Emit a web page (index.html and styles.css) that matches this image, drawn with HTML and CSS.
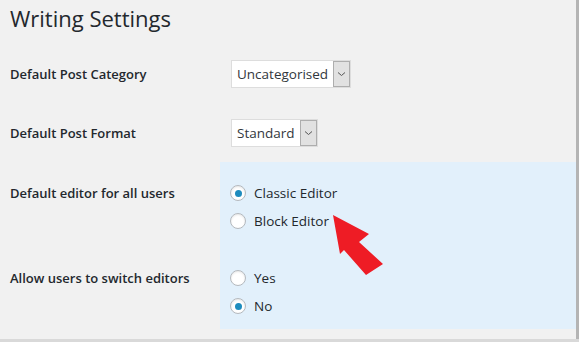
FILE: index.html
```html
<!DOCTYPE html>
<html lang="en">

<head>
    <meta charset="UTF-8">
    <title>Writing Settings</title>
    <link rel="stylesheet" href="styles.css">
</head>

<body>

    <div class="wrap">
        <h1>Writing Settings</h1>

        <div class="form-table">
            <!-- Category -->
            <div class="row">
                <div class="label">Default Post Category</div>
                <div class="field">
                    <div class="select select-cat">
                        <span class="select-text">Uncategorised</span>
                        <span class="select-btn">
                            <svg width="9" height="6" viewBox="0 0 9 6"><path d="M1 1.5 L4.5 4.5 L8 1.5" fill="none" stroke="#555" stroke-width="1"/></svg>
                        </span>
                    </div>
                </div>
            </div>

            <!-- Format -->
            <div class="row">
                <div class="label">Default Post Format</div>
                <div class="field">
                    <div class="select select-format">
                        <span class="select-text">Standard</span>
                        <span class="select-btn">
                            <svg width="9" height="6" viewBox="0 0 9 6"><path d="M1 1.5 L4.5 4.5 L8 1.5" fill="none" stroke="#555" stroke-width="1"/></svg>
                        </span>
                    </div>
                </div>
            </div>

            <!-- Classic editor plugin options -->
            <div class="row row-editor first">
                <div class="label">Default editor for all users</div>
                <div class="field highlight">
                    <div class="radio"><span class="dot checked"></span>Classic Editor</div>
                    <div class="radio"><span class="dot"></span>Block Editor</div>
                </div>
            </div>

            <div class="row row-editor last">
                <div class="label">Allow users to switch editors</div>
                <div class="field highlight">
                    <div class="radio"><span class="dot"></span>Yes</div>
                    <div class="radio"><span class="dot checked"></span>No</div>
                </div>
            </div>
        </div>

        <!-- red pointer arrow -->
        <svg class="arrow" width="60" height="70" viewBox="0 0 60 70">
            <polygon points="3,4 39,23 29,31 53,53 36,64 14,39 10,43" fill="#ee1c25"/>
        </svg>
    </div>

</body>

</html>
```

FILE: styles.css
```css
* {
    margin: 0;
    padding: 0;
    box-sizing: border-box;
}

body {
    font-family: 'Open Sans', 'Noto Sans', sans-serif;
    color: #23282d;
    background-color: #d9d9d9;
    width: 579px;
    height: 342px;
    overflow: hidden;
}

.wrap {
    position: relative;
    width: 579px;
    height: 339px;
    background-color: #f1f1f1;
    border-right: 3px solid #b4b4b4;
    padding-left: 10px;
}

h1 {
    font-size: 22px;
    font-weight: 400;
    line-height: 36px;
    height: 44px;
    letter-spacing: 0;
}

.row {
    display: grid;
    grid-template-columns: 210px 356px;
    height: 59px;
    align-items: center;
}

.label {
    font-size: 13px;
    font-weight: 600;
    line-height: 28px;
}

.field {
    padding-left: 11px;
}

.select {
    display: inline-flex;
    height: 28px;
    background-color: #fff;
    border: 1px solid #ddd;
    font-size: 13.5px;
    color: #32373c;
}

.select-text {
    padding: 0 5px 0 5px;
    line-height: 26px;
}

.select-btn {
    width: 17px;
    background-color: #e1e1e1;
    border: 1px solid #adadad;
    display: flex;
    align-items: center;
    justify-content: center;
}

.row-editor {
    height: auto;
    align-items: start;
}

.row-editor.first .label,
.row-editor.first .field {
    padding-top: 17px;
}

.row-editor.last .label,
.row-editor.last .field {
    padding-top: 29px;
}

.row-editor.last .field {
    padding-bottom: 9px;
}

.highlight {
    background-color: #e2f0fb;
    padding-left: 10px;
    align-self: stretch;
}

.radio {
    display: flex;
    align-items: center;
    gap: 8px;
    height: 28px;
    font-size: 13.5px;
    color: #23282d;
}

.dot {
    width: 16px;
    height: 16px;
    border-radius: 50%;
    border: 1px solid #b4b9be;
    background-color: #fff;
    box-shadow: inset 0 1px 2px rgba(0, 0, 0, 0.1);
    display: flex;
    align-items: center;
    justify-content: center;
}

.dot.checked::after {
    content: '';
    width: 7px;
    height: 7px;
    border-radius: 50%;
    background-color: #1e8cbe;
}

/* pointer arrow over the form */
.arrow {
    position: absolute;
    left: 330px;
    top: 211px;
}
```
